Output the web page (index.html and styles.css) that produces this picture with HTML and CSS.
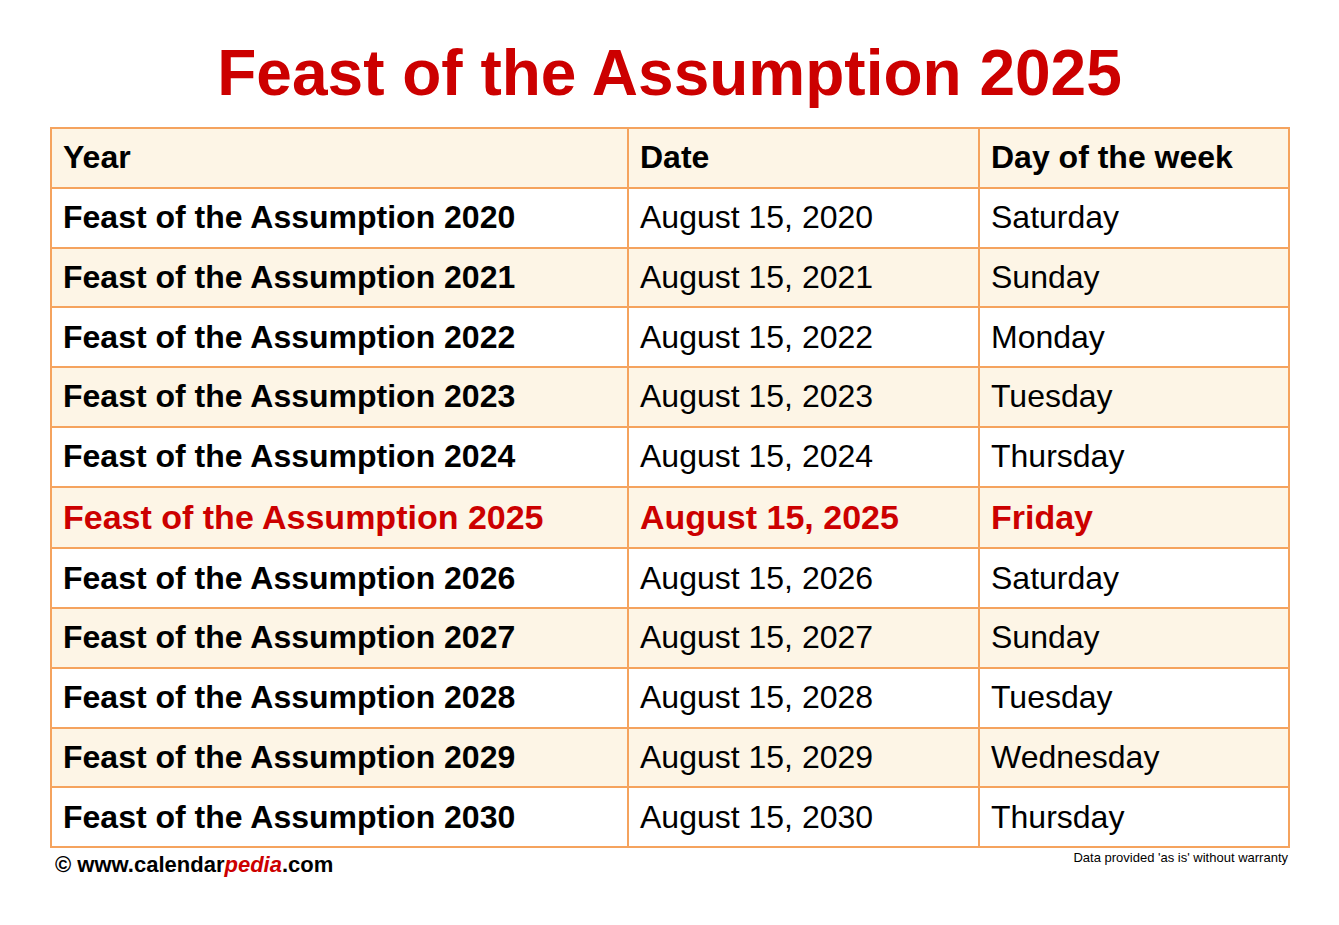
FILE: index.html
```html
<!DOCTYPE html>
<html>
<head>
<meta charset="utf-8">
<link rel="stylesheet" href="styles.css">
</head>
<body>
<div class="page">
  <h1 class="title">Feast of the Assumption 2025</h1>
  <table class="dates">
    <colgroup><col class="c1"><col class="c2"><col class="c3"></colgroup>
    <tr class="head"><th>Year</th><th>Date</th><th>Day of the week</th></tr>
    <tr><td class="name">Feast of the Assumption 2020</td><td>August 15, 2020</td><td>Saturday</td></tr>
    <tr class="alt"><td class="name">Feast of the Assumption 2021</td><td>August 15, 2021</td><td>Sunday</td></tr>
    <tr><td class="name">Feast of the Assumption 2022</td><td>August 15, 2022</td><td>Monday</td></tr>
    <tr class="alt"><td class="name">Feast of the Assumption 2023</td><td>August 15, 2023</td><td>Tuesday</td></tr>
    <tr><td class="name">Feast of the Assumption 2024</td><td>August 15, 2024</td><td>Thursday</td></tr>
    <tr class="alt current"><td class="name">Feast of the Assumption 2025</td><td>August 15, 2025</td><td>Friday</td></tr>
    <tr><td class="name">Feast of the Assumption 2026</td><td>August 15, 2026</td><td>Saturday</td></tr>
    <tr class="alt"><td class="name">Feast of the Assumption 2027</td><td>August 15, 2027</td><td>Sunday</td></tr>
    <tr><td class="name">Feast of the Assumption 2028</td><td>August 15, 2028</td><td>Tuesday</td></tr>
    <tr class="alt"><td class="name">Feast of the Assumption 2029</td><td>August 15, 2029</td><td>Wednesday</td></tr>
    <tr><td class="name">Feast of the Assumption 2030</td><td>August 15, 2030</td><td>Thursday</td></tr>
  </table>
  <div class="footer">
    <div class="brand">© www.calendar<span class="pedia">pedia</span>.com</div>
    <div class="note">Data provided 'as is' without warranty</div>
  </div>
</div>
</body>
</html>
```
FILE: styles.css
```css
html, body {
  margin: 0;
  padding: 0;
  background: #ffffff;
}
body {
  font-family: "Liberation Sans", Arial, sans-serif;
  color: #000;
}
.page {
  width: 1239px;
  margin-left: 50px;
}
.title {
  margin: 0;
  padding-top: 41px;
  height: 86px;
  line-height: 64px;
  font-size: 64px;
  font-weight: bold;
  color: #cc0000;
  text-align: center;
}
.dates {
  width: 1238px;
  border-collapse: collapse;
  table-layout: fixed;
  border: 2px solid #f5a35e;
}
.c1 { width: 577px; }
.c2 { width: 351px; }
.c3 { width: 310px; }
.dates th, .dates td {
  border: 2px solid #f5a35e;
  height: 57.75px;
  padding: 0 0 0 11px;
  text-align: left;
  font-size: 32px;
  font-weight: normal;
  white-space: nowrap;
}
.dates th {
  font-weight: bold;
  background: #fdf5e6;
}
.dates td.name {
  font-weight: bold;
}
.dates tr.alt td {
  background: #fdf5e6;
}
.dates tr.current td {
  color: #cc0000;
  font-weight: bold;
  height: 59.75px;
  font-size: 34px;
}
.footer {
  display: flex;
  justify-content: space-between;
  align-items: flex-start;
  padding-top: 2px;
}
.brand {
  padding-left: 5px;
  padding-top: 2px;
  font-size: 22px;
  font-weight: bold;
}
.pedia {
  color: #cc0000;
  font-style: italic;
}
.note {
  font-size: 13px;
  padding-right: 1px;
}
```
